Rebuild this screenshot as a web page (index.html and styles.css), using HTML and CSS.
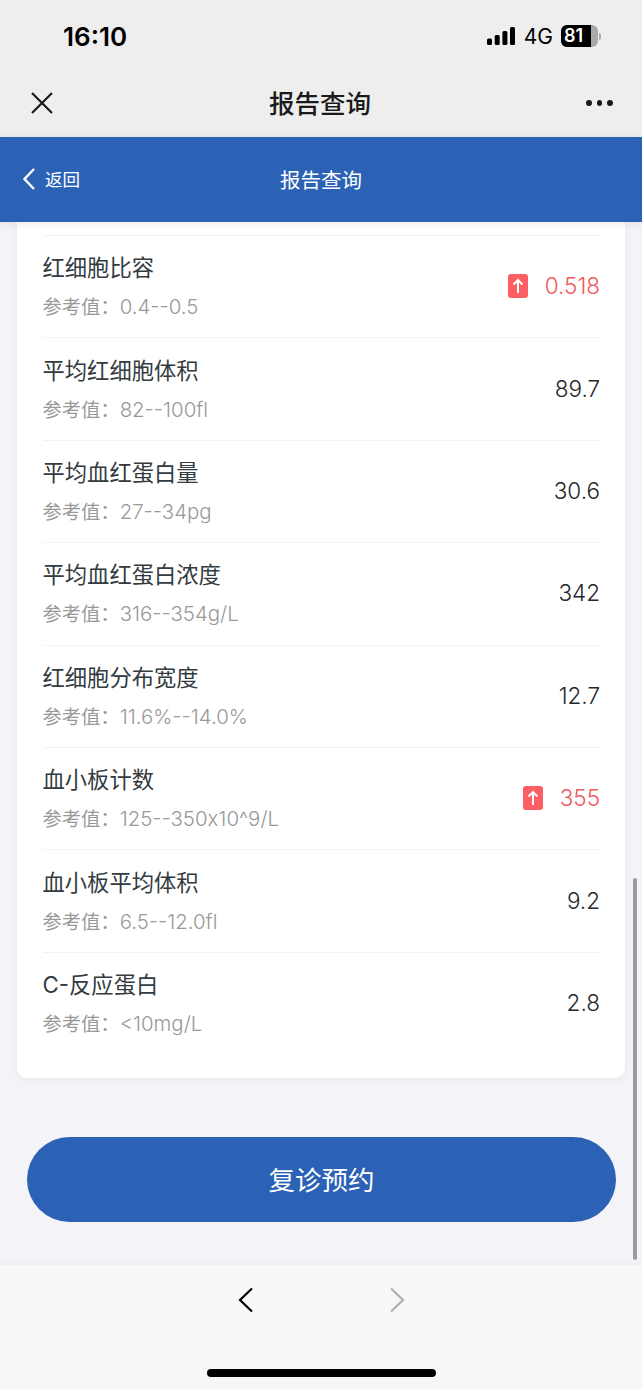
FILE: index.html
```html
<!DOCTYPE html>
<html lang="zh-CN">
<head>
    <meta charset="UTF-8">
    <meta name="viewport" content="width=device-width, initial-scale=1.0">
    <title>报告查询</title>
    <link rel="stylesheet" href="styles.css">
</head>
<body>
    <div class="phone">
        <div class="status-bar">
            <span class="time">16:10</span>
            <div class="status-right">
                <svg class="signal" width="28" height="18" viewBox="0 0 28 18">
                    <rect x="0" y="11.5" width="5" height="6.5" rx="1.5"/>
                    <rect x="7.7" y="8" width="5" height="10" rx="1.5"/>
                    <rect x="15.4" y="4" width="5" height="14" rx="1.5"/>
                    <rect x="23" y="0" width="5" height="18" rx="1.5"/>
                </svg>
                <span class="network">4G</span>
                <div class="battery"><span class="battery-level">81</span></div>
                <div class="battery-cap"></div>
            </div>
        </div>

        <div class="wx-nav">
            <svg class="wx-close" width="24" height="24" viewBox="0 0 24 24">
                <path d="M2 2 L22 22 M22 2 L2 22"/>
            </svg>
            <span class="wx-title">报告查询</span>
            <div class="wx-more"><i></i><i></i><i></i></div>
        </div>

        <header class="page-header">
            <div class="back">
                <svg width="14" height="24" viewBox="0 0 14 24">
                    <path d="M12 2 L2.5 12 L12 22"/>
                </svg>
                <span>返回</span>
            </div>
            <span class="page-title">报告查询</span>
        </header>

        <main class="content">
            <section class="card">
                <div class="row">
                    <div class="row-text">
                        <div class="row-name">红细胞比容</div>
                        <div class="row-ref">参考值：<span>0.4--0.5</span></div>
                    </div>
                    <div class="row-value high">
                        <span class="up-badge">
                            <svg width="12" height="16" viewBox="0 0 12 16"><path d="M6 15 V2 M1.5 6.5 L6 2 L10.5 6.5"/></svg>
                        </span>
                        0.518
                    </div>
                </div>
                <div class="row">
                    <div class="row-text">
                        <div class="row-name">平均红细胞体积</div>
                        <div class="row-ref">参考值：<span>82--100fl</span></div>
                    </div>
                    <div class="row-value">89.7</div>
                </div>
                <div class="row">
                    <div class="row-text">
                        <div class="row-name">平均血红蛋白量</div>
                        <div class="row-ref">参考值：<span>27--34pg</span></div>
                    </div>
                    <div class="row-value">30.6</div>
                </div>
                <div class="row">
                    <div class="row-text">
                        <div class="row-name">平均血红蛋白浓度</div>
                        <div class="row-ref">参考值：<span>316--354g/L</span></div>
                    </div>
                    <div class="row-value">342</div>
                </div>
                <div class="row">
                    <div class="row-text">
                        <div class="row-name">红细胞分布宽度</div>
                        <div class="row-ref">参考值：<span>11.6%--14.0%</span></div>
                    </div>
                    <div class="row-value">12.7</div>
                </div>
                <div class="row">
                    <div class="row-text">
                        <div class="row-name">血小板计数</div>
                        <div class="row-ref">参考值：<span>125--350x10^9/L</span></div>
                    </div>
                    <div class="row-value high">
                        <span class="up-badge">
                            <svg width="12" height="16" viewBox="0 0 12 16"><path d="M6 15 V2 M1.5 6.5 L6 2 L10.5 6.5"/></svg>
                        </span>
                        355
                    </div>
                </div>
                <div class="row">
                    <div class="row-text">
                        <div class="row-name">血小板平均体积</div>
                        <div class="row-ref">参考值：<span>6.5--12.0fl</span></div>
                    </div>
                    <div class="row-value">9.2</div>
                </div>
                <div class="row">
                    <div class="row-text">
                        <div class="row-name">C-反应蛋白</div>
                        <div class="row-ref">参考值：<span>&lt;10mg/L</span></div>
                    </div>
                    <div class="row-value">2.8</div>
                </div>
            </section>

            <button class="book-btn" type="button">复诊预约</button>
            <div class="scrollbar"></div>
        </main>

        <footer class="wx-footer">
            <div class="wx-arrows">
                <svg width="16" height="26" viewBox="0 0 16 26"><path d="M14 1.5 L2 13 L14 24.5"/></svg>
                <svg class="disabled" width="16" height="26" viewBox="0 0 16 26"><path d="M2 1.5 L14 13 L2 24.5"/></svg>
            </div>
            <div class="home-bar"></div>
        </footer>
    </div>
</body>
</html>
```

FILE: styles.css
```css
* {
    box-sizing: border-box;
}
body {
    margin: 0;
    font-family: Inter, "Noto Sans CJK SC", sans-serif;
    background-color: #f3f3f8;
}
.phone {
    display: flex;
    flex-direction: column;
    height: 1389px;
    overflow: hidden;
}

/* status bar */
.status-bar {
    height: 72px;
    flex-shrink: 0;
    display: flex;
    justify-content: space-between;
    align-items: center;
    padding: 0 41px 0 63px;
    background: #eeeeee;
    color: #000;
}
.time {
    font-size: 26px;
    font-weight: 600;
}
.status-right {
    display: flex;
    align-items: center;
}
.signal {
    fill: #000;
    margin-right: 9px;
}
.network {
    font-size: 21px;
    font-weight: 400;
    margin-right: 8px;
}
.battery {
    width: 37px;
    height: 22px;
    border-radius: 6px;
    overflow: hidden;
    background: #a9a9a9;
}
.battery-level {
    display: block;
    width: 30px;
    height: 22px;
    line-height: 22px;
    padding-left: 3px;
    background: #000;
    color: #fff;
    font-size: 18px;
    font-weight: 600;
}
.battery-cap {
    width: 2px;
    height: 7px;
    margin-left: 1px;
    border-radius: 0 2px 2px 0;
    background: #a9a9a9;
}

/* wechat nav */
.wx-nav {
    height: 65px;
    flex-shrink: 0;
    display: flex;
    justify-content: space-between;
    align-items: center;
    padding: 0 29px 4px 30px;
    background: #eeeeee;
}
.wx-close {
    fill: none;
    stroke: #1a1a1a;
    stroke-width: 2.2;
}
.wx-title {
    margin-bottom: 2px;
    font-size: 25.5px;
    font-weight: 500;
    color: #1a1a1a;
}
.wx-more {
    display: flex;
    gap: 5px;
    width: 27px;
}
.wx-more i {
    width: 6px;
    height: 6px;
    border-radius: 50%;
    background: #1a1a1a;
}

/* blue header */
.page-header {
    position: relative;
    z-index: 1;
    height: 85px;
    flex-shrink: 0;
    display: flex;
    justify-content: center;
    align-items: center;
    padding-bottom: 2px;
    background: #2b62b6;
    color: #fff;
    box-shadow: 0 2px 8px rgba(0,0,0,0.08);
}
.back {
    position: absolute;
    left: 22px;
    top: 29px;
    display: flex;
    align-items: center;
    gap: 9px;
    font-size: 17.5px;
}
.back svg {
    fill: none;
    stroke: #fff;
    stroke-width: 2.4;
}
.page-title {
    font-size: 20.5px;
}

/* report list */
.content {
    position: relative;
    flex: 1;
}
.card {
    margin: 0 17px;
    padding: 13px 25px 24px 25.5px;
    background: #fff;
    border-radius: 0 0 10px 10px;
    box-shadow: 0 2px 8px rgba(0,0,0,0.05);
}
.row {
    height: 102.4px;
    display: flex;
    justify-content: space-between;
    align-items: center;
    border-top: 1px solid #f2f2f2;
}
.row-name {
    font-size: 22.3px;
    line-height: 30px;
    color: #333b3f;
}
.row-ref {
    margin-top: 11px;
    font-size: 19.3px;
    line-height: 26px;
    color: #999;
}
.row-ref span {
    font-size: 20.4px;
    font-weight: 300;
}
.row-value {
    display: flex;
    align-items: center;
    padding-bottom: 2px;
    font-size: 22.5px;
    font-weight: 300;
    color: #1f282c;
}
.row-value.high {
    color: #f0595d;
}
.up-badge {
    display: flex;
    justify-content: center;
    align-items: center;
    width: 20px;
    height: 24px;
    margin-right: 17px;
    border-radius: 3px;
    background: #fb5f63;
}
.up-badge svg {
    fill: none;
    stroke: #fff;
    stroke-width: 2;
}

.book-btn {
    display: block;
    width: 589px;
    height: 85px;
    margin: 59px 0 0 27px;
    padding-bottom: 3px;
    border: 0;
    border-radius: 42.5px;
    background: #2b62b6;
    color: #fff;
    font-family: inherit;
    font-size: 26.5px;
}
.scrollbar {
    position: absolute;
    right: 5px;
    top: 656px;
    width: 4px;
    height: 382px;
    border-radius: 2px;
    background: #9a9aa0;
}

/* bottom toolbar */
.wx-footer {
    height: 126px;
    flex-shrink: 0;
    display: flex;
    flex-direction: column;
    align-items: center;
    border-top: 2px solid #efefef;
    background: #f7f7f7;
}
.wx-arrows {
    display: flex;
    gap: 135px;
    margin: 22px 0 0 0;
}
.wx-arrows svg {
    fill: none;
    stroke: #000;
    stroke-width: 2.2;
}
.wx-arrows svg.disabled {
    stroke: #b0b0b0;
}
.home-bar {
    width: 229px;
    height: 8px;
    margin-top: 56px;
    border-radius: 4px;
    background: #000;
}
```
